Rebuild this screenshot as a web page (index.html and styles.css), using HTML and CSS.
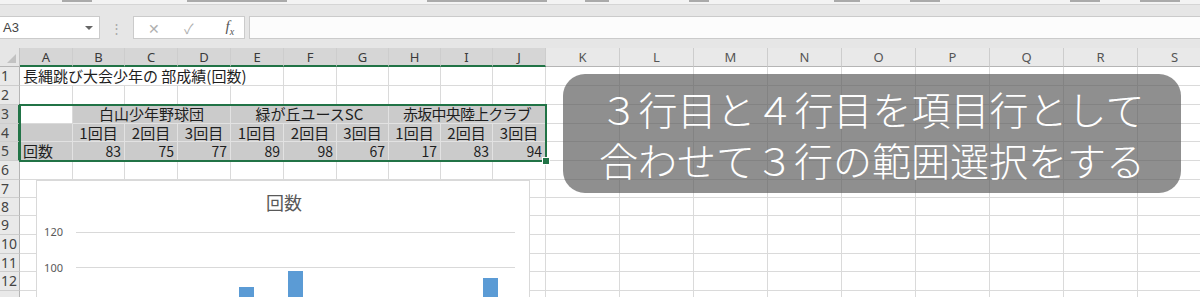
FILE: index.html
```html
<!DOCTYPE html>
<html lang="ja">
<head>
    <meta charset="UTF-8">
    <title>長縄跳び大会 - Excel</title>
    <link rel="stylesheet" href="styles.css">
</head>
<body>
    <div class="ribbon">
        <span class="mark" style="margin-left:62px;width:30px"></span>
        <span class="mark" style="margin-left:95px;width:100px"></span>
        <span class="mark" style="margin-left:140px;width:120px"></span>
        <span class="mark" style="margin-left:38px;width:24px"></span>
        <span class="mark" style="margin-left:80px;width:20px"></span>
        <span class="mark" style="margin-left:125px;width:26px"></span>
        <span class="mark" style="margin-left:50px;width:30px"></span>
        <span class="mark" style="margin-left:130px;width:30px"></span>
        <span class="mark" style="margin-left:40px;width:40px"></span>
    </div>

    <div class="formula-bar">
        <div class="name-box"><span>A3</span><i class="dropdown"></i></div>
        <div class="grip">⋮</div>
        <div class="fx-box">
            <span class="cancel">✕</span>
            <span class="enter">✓</span>
            <span class="fx">f<sub>x</sub></span>
        </div>
        <div class="formula-input"></div>
    </div>

    <div class="sheet">
        <div class="grid" id="grid"></div>

        <div class="selection"><span class="fill-handle"></span></div>

        <div class="chart">
            <svg width="494" height="118">
                <text x="248" y="30" class="chart-title">回数</text>
                <line x1="40" y1="52.5" x2="479" y2="52.5" class="gridline"></line>
                <line x1="40" y1="87.5" x2="479" y2="87.5" class="gridline"></line>
                <text x="27" y="56" class="axis-label">120</text>
                <text x="27" y="91.5" class="axis-label">100</text>
                <rect x="56" y="118" width="15" height="147" class="bar"></rect>
                <rect x="105" y="132" width="15" height="133" class="bar"></rect>
                <rect x="154" y="128" width="15" height="137" class="bar"></rect>
                <rect x="203" y="107" width="15" height="158" class="bar"></rect>
                <rect x="252" y="91" width="15" height="174" class="bar"></rect>
                <rect x="300" y="146" width="15" height="119" class="bar"></rect>
                <rect x="349" y="235" width="15" height="30" class="bar"></rect>
                <rect x="398" y="117" width="15" height="148" class="bar"></rect>
                <rect x="447" y="98" width="15" height="167" class="bar"></rect>
            </svg>
        </div>

        <div class="caption">
            <p>３行目と４行目を項目行として</p>
            <p>合わせて３行の範囲選択をする</p>
        </div>
    </div>

    <script>
        const cols = 'ABCDEFGHIJKLMNOPQRS'.split('');
        const grid = document.getElementById('grid');

        // cell data by row number, columns from A
        const data = {
            1: [{ t: '長縄跳び大会少年の 部成績(回数)', span: 5 }],
            3: [
                { cls: 'active' },
                { t: '白山少年野球団', span: 3, cls: 'center hl' },
                { t: '緑が丘ユースSC', span: 3, cls: 'center hl' },
                { t: '赤坂中央陸上クラブ', span: 3, cls: 'center hl narrow' }
            ],
            4: [{ cls: 'hl' }],
            5: [{ t: '回数', cls: 'hl' }]
        };
        for (let g = 0; g < 3; g++) {
            for (let n = 1; n <= 3; n++) {
                data[4].push({ t: n + '回目', cls: 'center hl' });
            }
        }
        [83, 75, 77, 89, 98, 67, 17, 83, 94].forEach(v => {
            data[5].push({ t: v, cls: 'num hl' });
        });

        function addCell(cls, text, span) {
            const el = document.createElement('div');
            el.className = cls;
            if (text !== undefined) el.textContent = text;
            if (span) el.style.gridColumn = 'span ' + span;
            grid.appendChild(el);
        }

        // column headers
        addCell('corner');
        cols.forEach((c, i) => addCell('ch' + (i < 10 ? ' sel' : ''), c));

        // rows (row 13 only peeks in at the bottom edge)
        for (let r = 1; r <= 13; r++) {
            addCell('rh' + (r >= 3 && r <= 5 ? ' sel' : ''), r < 13 ? r : undefined);
            const row = data[r] || [];
            let used = 0;
            row.forEach(cell => {
                addCell('cell ' + (cell.cls || ''), cell.t, cell.span);
                used += cell.span || 1;
            });
            for (; used < cols.length; used++) addCell('cell');
        }
    </script>
</body>
</html>
```

FILE: styles.css
```css
body {
    margin: 0;
    width: 1200px;
    height: 297px;
    overflow: hidden;
    background-color: #ffffff;
    font-family: "Noto Sans CJK JP", "Noto Sans", sans-serif;
    color: #222;
}

/* ribbon bottom edge, only the last pixels of its labels show */
.ribbon {
    height: 4px;
    background-color: #f3f3f3;
    border-bottom: 1px solid #d5d5d5;
    display: flex;
    align-items: flex-start;
}

.mark {
    height: 2px;
    background-color: #8a8a8a;
    opacity: 0.7;
}

/* formula bar */
.formula-bar {
    height: 43px;
    background-color: #e6e6e6;
    display: flex;
    align-items: flex-start;
    padding-top: 11px;
    box-sizing: border-box;
}

.name-box {
    width: 100px;
    height: 23px;
    background-color: #ffffff;
    border: 1px solid #cbcbcb;
    border-left: none;
    box-sizing: border-box;
    display: flex;
    align-items: center;
    justify-content: space-between;
    padding: 0 6px 0 3px;
    font-family: "Liberation Sans", sans-serif;
    font-size: 13px;
    color: #444;
}

.dropdown {
    width: 0;
    height: 0;
    border-left: 4px solid transparent;
    border-right: 4px solid transparent;
    border-top: 4px solid #666;
}

.grip {
    width: 33px;
    height: 23px;
    text-align: center;
    line-height: 23px;
    font-size: 13px;
    color: #a8a8a8;
}

.fx-box {
    width: 112px;
    height: 23px;
    background-color: #ffffff;
    border: 1px solid #cbcbcb;
    box-sizing: border-box;
    display: flex;
    align-items: center;
    padding-left: 14px;
    gap: 24px;
    font-size: 14px;
    color: #b0b0b0;
}

.fx {
    font-family: "Liberation Serif", serif;
    font-style: italic;
    font-size: 15px;
    color: #555;
    margin-left: 8px;
}

.fx sub {
    font-size: 10px;
}

.formula-input {
    flex: 1;
    margin-left: 4px;
    height: 23px;
    background-color: #fcfcfc;
    border: 1px solid #cbcbcb;
    border-right: none;
    box-sizing: border-box;
}

/* worksheet */
.sheet {
    position: relative;
}

.grid {
    display: grid;
    grid-template-columns: 20px 53px 52px 53px 53px 53px 53px 52px 52px 52px 53px repeat(9, 74px);
    grid-template-rows: 19px 19px 19px 19px 18px 19px 19px 18px 18px 19px 19px 18px 19px 19px;
}

.grid > div {
    box-sizing: border-box;
    white-space: nowrap;
}

.corner {
    background-color: #e6e6e6;
    border-right: 1px solid #c4c4c4;
    border-bottom: 1px solid #b5b5b5;
    position: relative;
}

.corner::after {
    content: "";
    position: absolute;
    right: 3px;
    bottom: 3px;
    border-left: 9px solid transparent;
    border-bottom: 9px solid #c2c2c2;
}

.ch {
    background-color: #e9e9e9;
    border-right: 1px solid #cdcdcd;
    border-bottom: 1px solid #b5b5b5;
    text-align: center;
    font-family: "Noto Sans", sans-serif;
    font-size: 13px;
    line-height: 18px;
    color: #555;
}

.ch.sel {
    background-color: #d6d6d6;
    border-bottom: 2px solid #217346;
    color: #3a3a3a;
}

.rh {
    background-color: #e9e9e9;
    border-right: 1px solid #b5b5b5;
    border-bottom: 1px solid #cdcdcd;
    padding-left: 1px;
    font-family: "Noto Sans", sans-serif;
    font-size: 14px;
    line-height: 18px;
    color: #444;
}

.rh.sel {
    background-color: #d6d6d6;
    border-right: 2px solid #217346;
}

.cell {
    border-right: 1px solid #dadada;
    border-bottom: 1px solid #dadada;
    padding: 0 3px;
    font-size: 15px;
    line-height: 18px;
    color: #1e1e1e;
}

.cell.hl {
    background-color: #cbcbcb;
    border-color: #e2e2e2;
}

.cell.center {
    text-align: center;
}

.cell.num {
    text-align: right;
    font-size: 14px;
}

.cell.narrow {
    letter-spacing: -0.8px;
}

/* selected range A3:J5 */
.selection {
    position: absolute;
    left: 19px;
    top: 56px;
    width: 528px;
    height: 58px;
    border: 2px solid #217346;
    box-sizing: border-box;
}

.fill-handle {
    position: absolute;
    right: -5px;
    bottom: -5px;
    width: 6px;
    height: 6px;
    background-color: #217346;
    border: 1px solid #ffffff;
}

/* embedded chart, cut by the window edge */
.chart {
    position: absolute;
    left: 36px;
    top: 132px;
    width: 494px;
    height: 118px;
    background-color: #ffffff;
    border: 1px solid #d9d9d9;
    border-bottom: none;
    box-sizing: border-box;
    overflow: hidden;
}

.chart svg {
    display: block;
    margin: -1px 0 0 -1px;
}

.chart-title {
    font-size: 18px;
    fill: #595959;
    text-anchor: middle;
}

.axis-label {
    font-family: "Noto Sans", sans-serif;
    font-size: 11px;
    fill: #595959;
    text-anchor: end;
}

.gridline {
    stroke: #d9d9d9;
    stroke-width: 1;
}

.bar {
    fill: #5b9bd5;
}

/* tutorial caption */
.caption {
    position: absolute;
    left: 563px;
    top: 26px;
    width: 618px;
    height: 119px;
    border-radius: 22px;
    background-color: rgba(90, 90, 90, 0.68);
    display: flex;
    flex-direction: column;
    justify-content: center;
    align-items: center;
}

.caption p {
    margin: 0;
    font-size: 39px;
    line-height: 51px;
    color: #ffffff;
    font-weight: 300;
}
```
